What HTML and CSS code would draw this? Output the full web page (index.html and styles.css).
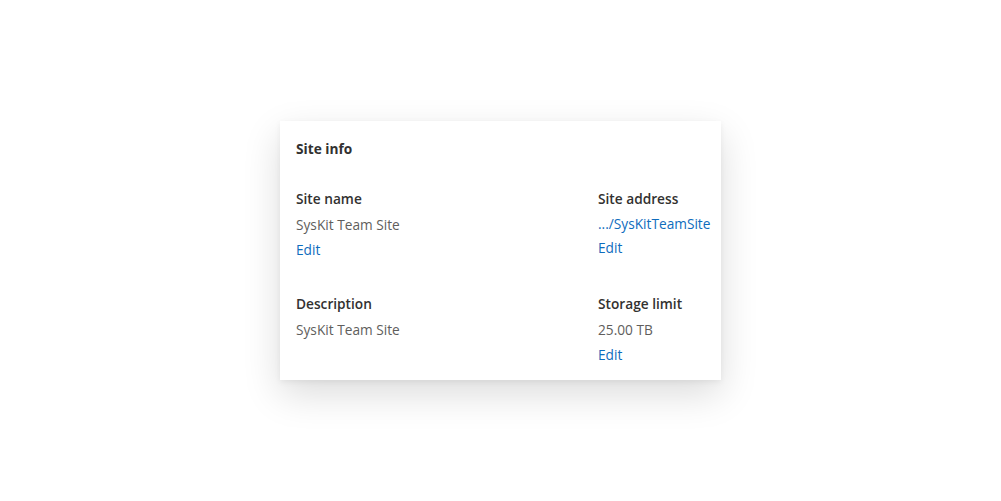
FILE: index.html
```html
<!DOCTYPE html>
<html>
<head>
<meta charset="utf-8">
<link rel="stylesheet" href="styles.css">
</head>
<body>
<div class="stage">
  <section class="card">
    <h2 class="title">Site info</h2>
    <div class="grid">
      <div class="field">
        <div class="label">Site name</div>
        <div class="value">SysKit Team Site</div>
        <a class="link">Edit</a>
      </div>
      <div class="field">
        <div class="label">Site address</div>
        <a class="value link">.../SysKitTeamSite</a>
        <a class="link edit-tight">Edit</a>
      </div>
      <div class="field">
        <div class="label">Description</div>
        <div class="value">SysKit Team Site</div>
      </div>
      <div class="field">
        <div class="label">Storage limit</div>
        <div class="value">25.00 TB</div>
        <a class="link">Edit</a>
      </div>
    </div>
  </section>
</div>
</body>
</html>
```
FILE: styles.css
```css
html, body { margin: 0; padding: 0; background: #ffffff; }
body { font-family: "Open Sans", "Noto Sans", sans-serif; font-size: 13.7px; color: #323130; }
.stage { width: 1001px; height: 501px; display: flex; padding-top: 121px; padding-left: 280px; box-sizing: border-box; }
.card {
  width: 441px; height: 259px; box-sizing: border-box; background: #fff;
  padding: 18px 11px 14px 16px;
  box-shadow: 0 14px 36px rgba(0,0,0,0.14), 0 2px 6px rgba(0,0,0,0.06);
}
.title { margin: 0; font-size: 13.7px; font-weight: 700; line-height: 20px; color: #323130; }
.grid { margin-top: 30px; display: grid; grid-template-columns: 302px auto; row-gap: 34px; }
.field { display: flex; flex-direction: column; align-items: flex-start; }
.label { font-weight: 600; line-height: 20px; color: #323130; }
.value { margin-top: 6px; line-height: 20px; color: #605e5c; }
.link { margin-top: 5px; line-height: 20px; color: #0f6cbd; cursor: pointer; }
.value.link { color: #0f6cbd; margin-top: 5px; }
.edit-tight { margin-top: 4px; }
```
